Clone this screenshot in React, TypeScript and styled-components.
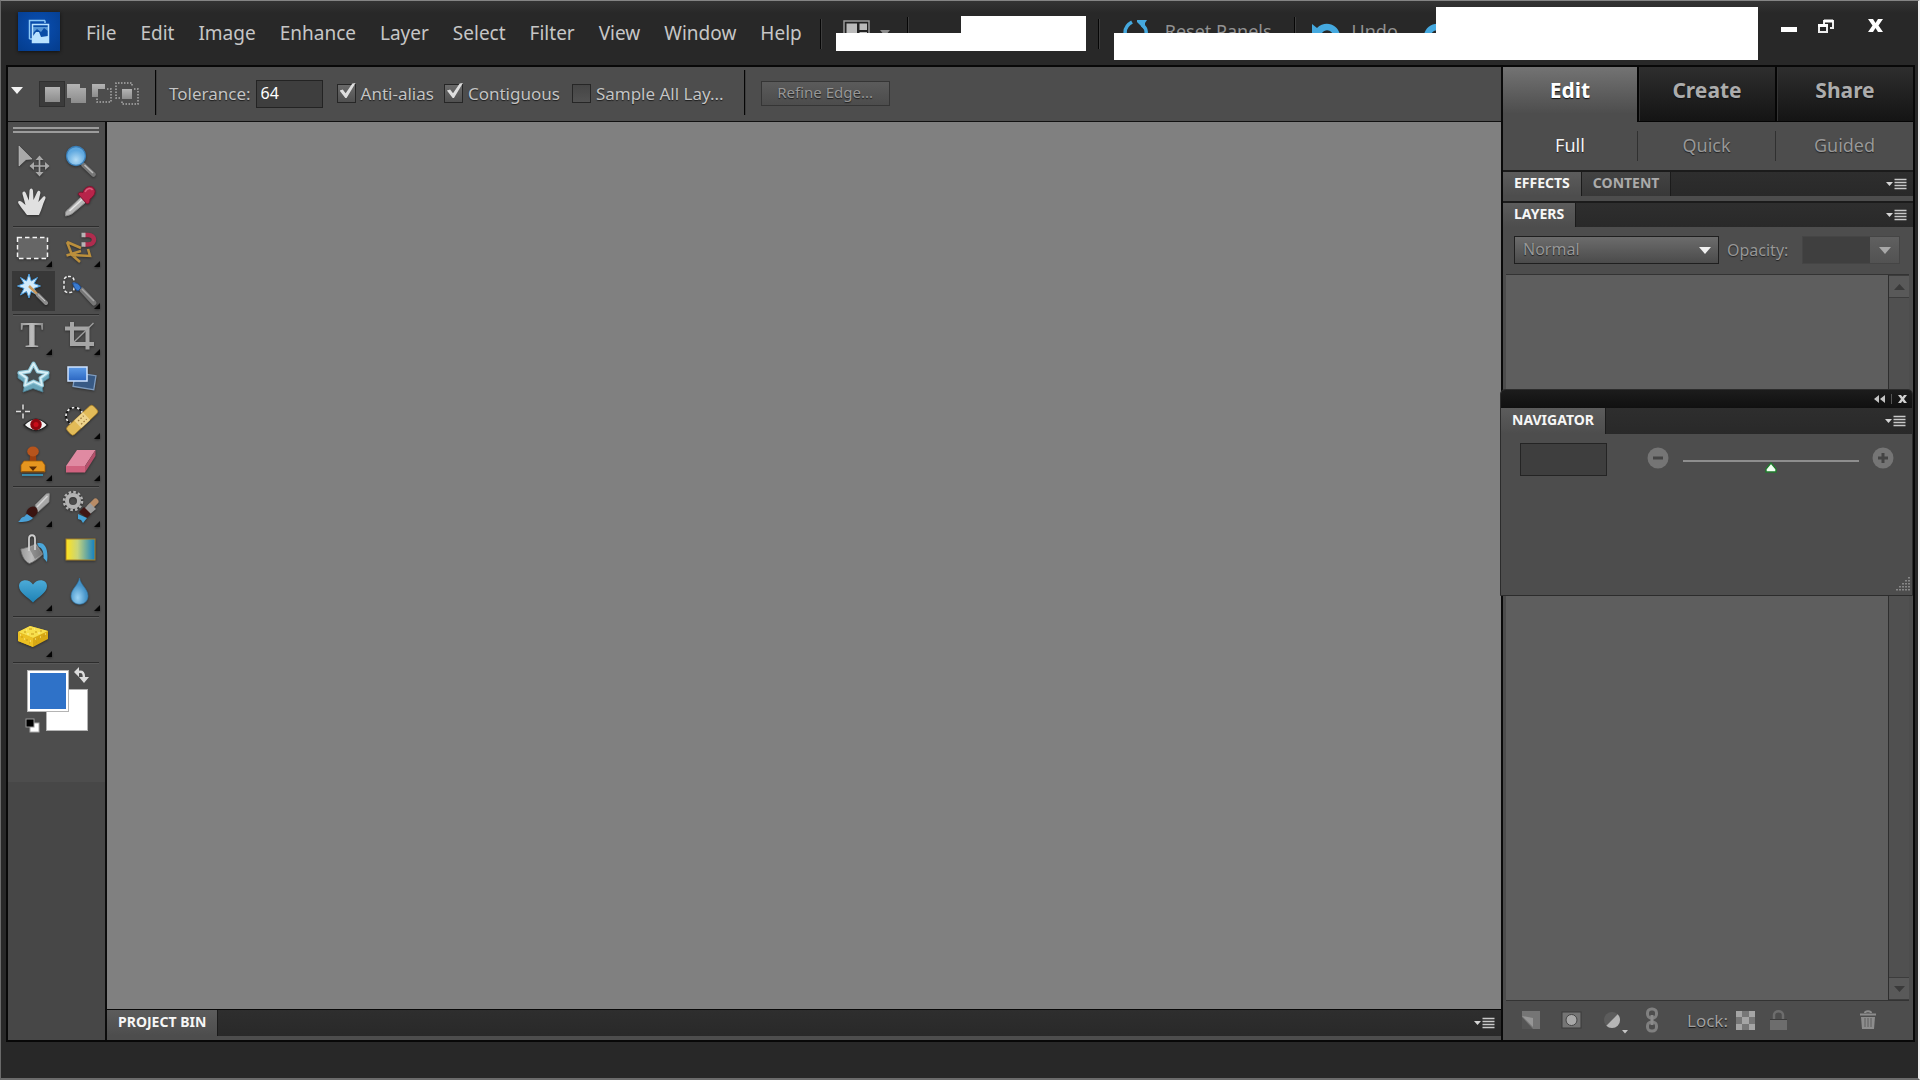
import React from "react";
import styled, { createGlobalStyle, css } from "styled-components";

const Global = createGlobalStyle`
  *, *::before, *::after { box-sizing: border-box; }
  body {
    margin: 0;
    background: #282828;
    font-family: "Noto Sans", "Open Sans", sans-serif;
    font-size: 17px;
    color: #c4c4c4;
  }
  button, input, select { font: inherit; color: inherit; }
  button { padding: 0; border: 0; background: none; cursor: pointer; }
  svg { display: block; }
`;

/* ---------- window frame ---------- */

const Frame = styled.div`
  display: flex;
  flex-direction: column;
  min-height: 100vh;
  border-top: 1px solid #858585;
  border-left: 1px solid #6a6a6a;
  border-right: 2px solid #f0f0f0;
  border-bottom: 2px solid #6c6c6c;
  background: linear-gradient(#343434, #282828 12px);
`;

const TitleBar = styled.header`
  display: flex;
  align-items: center;
  height: 64px;
  padding-left: 17px;
`;

const Logo = styled.div`
  width: 42px;
  height: 39px;
  margin-bottom: 4px;
  background: radial-gradient(circle at 50% 40%, #0a50b4, #043c8c);
  box-shadow: 0 1px 3px #111;
`;

const MenuBar = styled.nav`
  display: flex;
  gap: 24px;
  margin-left: 26px;
`;

const MenuItem = styled.button`
  font-size: 19px;
  line-height: 24px;
  color: #c6c6c6;
`;

const Rule = styled.span<{ $h: number; $top?: number; $ml?: number }>`
  flex: none;
  align-self: flex-start;
  width: 2px;
  height: ${(p) => p.$h}px;
  margin-top: ${(p) => p.$top ?? 0}px;
  margin-left: ${(p) => p.$ml ?? 0}px;
  border-left: 1px solid #060606;
  border-right: 1px solid #3e3e3e;
`;

const QuickBar = styled.div`
  position: relative;
  display: flex;
  flex: 1;
  align-self: stretch;
  align-items: flex-start;
  margin-left: 18px;
`;

const QuickButton = styled.button<{ $ml: number; $gap?: number }>`
  display: flex;
  align-items: flex-start;
  gap: ${(p) => p.$gap ?? 8}px;
  margin-left: ${(p) => p.$ml}px;
  padding-top: 18px;
  font-size: 18px;
  line-height: 24px;
  color: #929292;
  white-space: nowrap;
`;

const Cover = styled.span<{ $x: number; $y: number; $w: number; $h: number }>`
  position: absolute;
  left: ${(p) => p.$x}px;
  top: ${(p) => p.$y}px;
  width: ${(p) => p.$w}px;
  height: ${(p) => p.$h}px;
  background: #fff;
`;

const WindowButtons = styled.div`
  display: flex;
  align-self: flex-start;
  align-items: flex-start;
  gap: 17px;
  padding: 14px 33px 0 0;
`;

const WindowButton = styled.button<{ $ml?: number }>`
  width: 20px;
  height: 22px;
  margin-left: ${(p) => p.$ml ?? 0}px;
`;

const Workspace = styled.main`
  position: relative;
  display: flex;
  flex: 1;
  margin: 0 3px 0 5px;
  border: 2px solid #080808;
  background: #4d4d4d;
`;

const StatusStrip = styled.footer`
  height: 36px;
`;

const LeftSide = styled.div`
  display: flex;
  flex: 1;
  flex-direction: column;
  min-width: 0;
`;

/* ---------- option bar ---------- */

const OptionBar = styled.div`
  display: flex;
  align-items: center;
  height: 55px;
  padding-bottom: 1px;
  border-bottom: 1px solid #111;
  background: #4d4d4d;
  text-shadow: 0 1px 1px #1c1c1c;
`;

const PresetButton = styled.button`
  width: 12px;
  height: 14px;
  margin: 0 16px 6px 3px;
`;

const ModeGroup = styled.div`
  display: flex;
  margin-right: 15px;
`;

const ModeButton = styled.button<{ $on?: boolean }>`
  width: ${(p) => (p.$on ? 26 : 25)}px;
  height: 26px;
  ${(p) => p.$on && css`background: #3b3b3b; box-shadow: inset 0 0 0 1px #303030;`}
`;

const ToleranceField = styled.label`
  display: flex;
  align-items: center;
  gap: 5px;
  margin-left: 12px;
  input {
    width: 67px;
    height: 28px;
    padding: 0 4px 2px;
    border: 1px solid #232323;
    background: #3e3e3e;
    color: #fff;
    font-size: 16px;
  }
`;

const TickField = styled.label<{ $ml: number }>`
  display: flex;
  align-items: center;
  gap: 5px;
  margin-left: ${(p) => p.$ml}px;
  white-space: nowrap;
  input {
    position: relative;
    appearance: none;
    width: 19px;
    height: 19px;
    margin: 0;
    border: 1px solid #262626;
    background: linear-gradient(#454545, #525252);
  }
  input:checked {
    background: linear-gradient(#6a6a6a, #505050);
  }
  input:checked::after {
    content: "";
    position: absolute;
    left: 2px;
    top: -2px;
    width: 16px;
    height: 15px;
    background: #dedede;
    clip-path: polygon(0 50%, 20% 44%, 38% 68%, 80% 4%, 100% 0, 44% 100%, 36% 100%);
  }
`;

const RefineButton = styled.button`
  width: 129px;
  height: 25px;
  margin: 0 0 1px 15px;
  padding-bottom: 2px;
  border: 1px solid #353535;
  background: linear-gradient(#5b5b5b, #4c4c4c);
  font-size: 15px;
  line-height: 20px;
  color: #979797;
  text-shadow: 0 1px 1px #1c1c1c;
`;

/* ---------- toolbox ---------- */

const Row = styled.div`
  display: flex;
  flex: 1;
`;

const Toolbox = styled.aside`
  width: 99px;
  border-right: 2px solid #0c0c0c;
  background: #474747;
`;

const ToolPanel = styled.div`
  height: 660px;
  padding: 5px 5px 0 4px;
  background: #4d4d4d;
`;

const Grip = styled.div`
  height: 6px;
  margin: 0 1px 8px;
  border: solid #9c9c9c;
  border-width: 2px 0;
`;

const ToolGroup = styled.div`
  display: grid;
  grid-template-columns: 44px 44px;
  column-gap: 4px;
`;

const ToolRule = styled.hr`
  height: 4px;
  margin: 0 1px;
  border: 0;
  background: linear-gradient(transparent 1px, #2c2c2c 1px, #2c2c2c 2px, #5a5a5a 2px, #5a5a5a 3px, transparent 3px);
`;

const Tool = styled.button<{ $on?: boolean }>`
  width: 44px;
  height: 42px;
  ${(p) => p.$on && css`
    background: linear-gradient(#383838, #383838) 0 0 / 43px 40px no-repeat;
  `}
  svg { overflow: visible; filter: drop-shadow(0 1px 1px rgba(0, 0, 0, 0.4)); }
`;

const Swatches = styled.div`
  position: relative;
  height: 76px;
`;

const Swatch = styled.button<{ $x: number; $y: number; $fill: string }>`
  position: absolute;
  left: ${(p) => p.$x}px;
  top: ${(p) => p.$y}px;
  width: 42px;
  height: 42px;
  border: 1px solid #b4b4b4;
  background: ${(p) => p.$fill};
  box-shadow: inset 0 0 0 2px #fff;
`;

const SwatchAction = styled.button<{ $x: number; $y: number }>`
  position: absolute;
  left: ${(p) => p.$x}px;
  top: ${(p) => p.$y}px;
`;

/* ---------- document area ---------- */

const DocumentArea = styled.section`
  display: flex;
  flex: 1;
  flex-direction: column;
`;

const Canvas = styled.div`
  flex: 1;
  background: #808080;
`;

const BinBar = styled.div`
  padding-bottom: 4px;
  border-top: 1px solid #080808;
`;

/* ---------- panels ---------- */

const TabStrip = styled.div<{ $line?: boolean }>`
  display: flex;
  align-items: stretch;
  height: 26px;
  border-top: ${(p) => (p.$line === false ? 0 : 2)}px solid #1b1b1b;
  background: linear-gradient(#2e2e2e, #292929);
`;

const Tab = styled.button<{ $on?: boolean }>`
  padding: 0 11px 2px;
  border-right: 1px solid #1b1b1b;
  background: ${(p) => (p.$on ? "linear-gradient(#5c5c5c, #4d4d4d)" : "linear-gradient(#434343, #383838)")};
  color: ${(p) => (p.$on ? "#f6f6f6" : "#ababab")};
  font-size: 14px;
  font-weight: 700;
  line-height: 20px;
`;

const PanelMenu = styled.button`
  margin-left: auto;
  padding: 0 6px 0 0;
`;

const TrashButton = styled.button`
  margin-left: auto;
`;

const SidePanel = styled.aside`
  display: flex;
  flex-direction: column;
  width: 412px;
  border-left: 2px solid #0a0a0a;
  background: #4d4d4d;
`;

const BigTabs = styled.div`
  display: grid;
  grid-template-columns: 134px 1fr 1fr;
`;

const BigTab = styled.button<{ $on?: boolean }>`
  height: 55px;
  padding-bottom: 9px;
  border: solid #050505;
  border-width: ${(p) => (p.$on ? "0" : "0 0 1px 2px")};
  background: ${(p) => (p.$on ? "linear-gradient(#737373, #4d4d4d 85%)" : "linear-gradient(#2e2e2e, #141414)")};
  box-shadow: ${(p) => (p.$on ? "none" : "inset 1px 0 0 #333")};
  color: ${(p) => (p.$on ? "#fff" : "#acacac")};
  font-size: 21px;
  font-weight: 700;
  line-height: 28px;
  text-shadow: 0 1px 1px #111;
`;

const SubTabs = styled.div`
  display: grid;
  grid-template-columns: 134px 1fr 1fr;
  height: 48px;
  padding: 9px 0;
`;

const SubTab = styled.button<{ $on?: boolean }>`
  padding-bottom: 2px;
  border-left: ${(p) => (p.$on ? 0 : 1)}px solid #303030;
  color: ${(p) => (p.$on ? "#f4f4f4" : "#989898")};
  font-size: 18px;
  line-height: 24px;
  text-shadow: 0 1px 1px #222;
`;

const Gap = styled.div`
  height: 5px;
`;

const BlendRow = styled.div`
  display: flex;
  align-items: center;
  height: 47px;
  padding: 0 13px 1px 11px;
  color: #979797;
  text-shadow: 0 1px 1px #222;
`;

const SelectBox = styled.span`
  display: grid;
  width: 205px;
  select, svg { grid-area: 1 / 1; }
  svg { place-self: center end; margin-right: 8px; pointer-events: none; }
  select {
    appearance: none;
    height: 28px;
    padding: 0 8px 3px;
    border: 1px solid #1f1f1f;
    background: linear-gradient(#6c6c6c, #4b4b4b);
    outline: 0;
    font-size: 16px;
    text-shadow: inherit;
  }
`;

const OpacityField = styled.label`
  display: flex;
  flex: 1;
  align-items: center;
  justify-content: space-between;
  margin-left: 8px;
  font-size: 16px;
`;

const OpacityBox = styled.span`
  display: flex;
  height: 28px;
  border: 1px solid #454545;
  background: #3f3f3f;
  input { width: 67px; border: 0; padding: 0 4px; background: none; }
  button { display: grid; place-items: center; width: 29px; background: linear-gradient(#606060, #525252); }
`;

const LayerList = styled.div`
  display: flex;
  flex: 1;
  margin: 0 4px 0 3px;
  border: solid #333;
  border-width: 1px 0;
  background: #5e5e5e;
`;

const ScrollTrack = styled.div`
  display: flex;
  flex-direction: column;
  justify-content: space-between;
  width: 21px;
  margin-left: auto;
  border-left: 1px solid #2e2e2e;
  background: #505050;
`;

const ScrollButton = styled.button`
  display: grid;
  place-items: center;
  height: 23px;
  border: solid #3c3c3c;
  border-width: 1px 0;
  background: #595959;
`;

const LayerActions = styled.div`
  display: flex;
  align-items: center;
  height: 39px;
  padding: 0 36px 1px 18px;
  color: #a0a0a0;
  text-shadow: 0 1px 1px #111;
`;

const ActionButton = styled.button<{ $ml?: number }>`
  margin-left: ${(p) => p.$ml ?? 0}px;
  svg { overflow: visible; }
`;

const LockLabel = styled.span`
  margin-left: 28px;
`;

/* ---------- floating navigator ---------- */

const Navigator = styled.section`
  position: absolute;
  top: 322px;
  right: 0;
  width: 413px;
  height: 207px;
  border: 1px solid #2c2c2c;
  border-radius: 5px 5px 0 0;
  overflow: hidden;
  background: #4d4d4d;
`;

const NavTitle = styled.div`
  display: flex;
  justify-content: flex-end;
  align-items: center;
  gap: 6px;
  height: 18px;
  padding-right: 5px;
  background: linear-gradient(#1c1c1c, #101010);
`;

const NavBody = styled.div`
  display: flex;
  align-items: flex-start;
  padding: 9px 18px 0 19px;
`;

const ZoomInput = styled.input`
  width: 87px;
  height: 33px;
  margin-right: 40px;
  border: 1px solid #242424;
  background: #3e3e3e;
`;

const ZoomButton = styled.button`
  margin-top: 4px;
`;

const ZoomSlider = styled.input`
  appearance: none;
  flex: 1;
  min-width: 0;
  height: 16px;
  margin: 16px 13px 0 14px;
  background: linear-gradient(#8e8e8e, #8e8e8e) 0 1px / 100% 2px no-repeat;
  &::-webkit-slider-thumb {
    appearance: none;
    width: 12px;
    height: 12px;
    margin-top: 2px;
    background: url("data:image/svg+xml,%3Csvg xmlns='http://www.w3.org/2000/svg' width='12' height='12'%3E%3Cpath d='M6 1 11 7V10H1V7Z' fill='%23f2fff2' stroke='%231f7a2c' stroke-width='1.4'/%3E%3C/svg%3E");
  }
`;

const ResizeGrip = styled.svg`
  position: absolute;
  right: 2px;
  bottom: 4px;
`;

const HiddenDefs = styled.svg`
  position: absolute;
`;

/* ---------- drawings ---------- */

const Down = ({ w = 11, h = 6, c = "#eee" }: { w?: number; h?: number; c?: string }) => (
  <svg width={w} height={h} viewBox="0 0 10 6" preserveAspectRatio="none"><path d="M0 0H10L5 6Z" fill={c} /></svg>
);

const MenuGlyph = () => (
  <svg width="22" height="12" viewBox="0 0 22 12">
    <path d="M1 4H8L4.500 8Z" fill="#d5d5d5" />
    <path d="M9.500 1.500H21.500M9.500 4.500H21.500M9.500 7.500H21.500M9.500 10.500H21.500" stroke="#c9c9c9" strokeWidth="1.300" />
  </svg>
);

const Fly = () => <path d="M34 38 40 32V38Z" fill="#050505" />;

const toolArt: Record<string, React.ReactNode> = {
  Move: (
    <>
      <path d="M7 5 20 18 14 18.500 7 25Z" fill="#a9a9a9" stroke="#c0c0c0" strokeWidth=".6" />
      <path d="M27.500 16V34M18.500 25H36.500" stroke="#a8a8a8" strokeWidth="1.700" />
      <path d="M27.500 14.500 31.500 19H23.500ZM27.500 35.500 31.500 31H23.500ZM17.500 25 22 21V29ZM37.500 25 33 21V29Z" fill="#a8a8a8" />
    </>
  ),
  Zoom: (
    <>
      <path d="M23.500 24 33.500 33.500" stroke="#777" strokeWidth="4.500" strokeLinecap="round" />
      <path d="M24.500 24 33 32" stroke="#bbb" strokeWidth="1.500" />
      <circle cx="16" cy="15" r="9.500" fill="url(#lens)" stroke="#3b7fb8" strokeWidth="1.300" />
    </>
  ),
  Hand: (
    <path d="M15 32C12 28 8 23 6.500 20.500 5 18 8 17 10 19L13.500 22 10.500 11C10 8 13 7.500 13.800 10L16.800 17.500 17.500 8C17.500 4.500 21 4.500 21 8L21.500 17 25 9.500C26 6.500 29 7.500 28.300 10.500L26.300 19 30.500 14.500C32.500 12 34.500 14 33 16.500 30.500 21.500 30 26 27 32Z" fill="#e0e0e0" />
  ),
  Eyedropper: (
    <>
      <path d="M5.500 33C5 29 6 28 8.500 26L21 14 26 19 13 30C10.500 32 9 32 5.500 33Z" fill="#b5b5b5" stroke="#8b8b8b" />
      <path d="M9.500 28 22 16.500" stroke="#e5e5e5" strokeWidth="1.500" />
      <path d="M18 11C19 9 21 9 23 9.500 24 4 31 1.500 34 5.500 37 9.500 33 14 30 16 30 19 29 21.500 26.500 20.500Z" fill="#b8244a" stroke="#7f1430" />
      <path d="M25 9C27 5 31 4.500 32.500 7" fill="none" stroke="#d9607c" strokeWidth="1.500" />
    </>
  ),
  Marquee: (
    <><rect x="5.500" y="8.500" width="30" height="21" fill="#666" stroke="#f5f5f5" strokeWidth="1.500" strokeDasharray="4.500 3" /><Fly /></>
  ),
  Lasso: (
    <>
      <path d="M7 13 21 19M7 13 12 26 30 27 28 20M12 26 20 33M6.500 26.500 21 22" fill="none" stroke="#bb8f3c" strokeWidth="2.500" />
      <path d="M24 6H28C36 6 36 15.500 28 15.500H24" fill="none" stroke="#b02c4e" strokeWidth="4.500" />
      <path d="M21.500 6H25.500M21.500 15.500H25.500" stroke="#b5b5b5" strokeWidth="4.500" /><Fly />
    </>
  ),
  Wand: (
    <>
      <path d="M17 3 19.200 10 25.500 6.500 22 12.500 28.500 15 22 17.500 25.500 24 19 20.500 17 27 14.500 20.500 8.500 24 12 17.500 5.500 15 12 12.500 8.500 6.500 14.500 10Z" fill="#d2ecfd" stroke="#4a9bdc" />
      <path d="M17 15 26 24" stroke="#c99a5f" strokeWidth="2.500" />
      <path d="M26 24 34 32" stroke="#8d8d8d" strokeWidth="4" strokeLinecap="round" /><path d="M26 23.500 33 30" stroke="#ccc" />
    </>
  ),
  "Quick selection": (
    <>
      <rect x="4" y="5.500" width="10" height="16" rx="4" fill="none" stroke="#eee" strokeWidth="1.500" strokeDasharray="3 2" />
      <path d="M22 19 34 32" stroke="#777" strokeWidth="5" strokeLinecap="round" /><path d="M22 18 34 30" stroke="#a5a5a5" strokeWidth="1.500" />
      <path d="M12.500 12C17 11 20 14 21 17L18 20C14 18 14 15 12.500 12Z" fill="#3a7bd0" stroke="#1d4c91" /><Fly />
    </>
  ),
  Type: (
    <><text x="20" y="30" textAnchor="middle" fontFamily="Liberation Serif, serif" fontWeight="700" fontSize="35" fill="url(#steel)">T</text><Fly /></>
  ),
  Crop: (
    <>
      <path d="M5 11.500H27.500V32.500M12 5V27H34" fill="none" stroke="#a6a6a6" strokeWidth="4" />
      <path d="M14 25 33.500 6" stroke="#a0a0a0" strokeWidth="1.300" /><Fly />
    </>
  ),
  "Cookie cutter": (
    <>
      <path d="M6 14V19L13 24 11 33 21 29.500 31 33 29.500 24 37 19V14L21 22Z" fill="#6aa6ba" stroke="#4c8094" strokeWidth=".8" />
      <path d="M21.500 4.500 25.800 12.500 35.500 13.800 28.500 19 30 26.500 21.500 22.500 13 26.500 14.500 19 7.500 13.800 17.200 12.500Z" fill="#454e52" stroke="#8cc3d5" strokeWidth="4" strokeLinejoin="round" />
      <path d="M21.500 4.500 25.800 12.500 35.500 13.800 28.500 19 30 26.500 21.500 22.500 13 26.500 14.500 19 7.500 13.800 17.200 12.500Z" fill="none" stroke="#d9f0f7" strokeWidth="1.800" strokeLinejoin="round" />
    </>
  ),
  Straighten: (
    <>
      <rect x="14" y="15" width="21" height="14" transform="rotate(9 24 22)" fill="#385a85" stroke="#7f9dc0" strokeWidth="1.300" />
      <rect x="8" y="8" width="19" height="14" fill="url(#blue)" stroke="#cfe4ff" strokeWidth="1.500" />
    </>
  ),
  "Red eye": (
    <>
      <path d="M11 3.500V8.500M11 12.500V17.500M4 10.500H9M13 10.500H18" stroke="#ddd" strokeWidth="1.500" />
      <path d="M12 24Q24 12 35.500 24 24 35 12 24Z" fill="#f4f4f4" stroke="#222" strokeWidth="1.200" />
      <circle cx="24" cy="23.500" r="5.700" fill="#8f0710" /><circle cx="24" cy="23.500" r="2.500" fill="#c90d1a" />
    </>
  ),
  Healing: (
    <>
      <circle cx="14.500" cy="15" r="8.500" fill="none" stroke="#111" strokeWidth="1.700" />
      <circle cx="14.500" cy="15" r="8.500" fill="none" stroke="#eee" strokeWidth="1.700" strokeDasharray="2.500 2.800" />
      <g transform="rotate(-43 22 19)"><rect x="4" y="14" width="36" height="10.500" rx="3" fill="#e2bb58" stroke="#a17a27" strokeWidth=".7" /><rect x="16" y="14" width="12" height="10.500" fill="#eed48c" /><path d="M18.500 17H26M18.500 21.500H26" stroke="#9e7a3c" strokeWidth="1.300" strokeDasharray="1.500 1.800" /></g><Fly />
    </>
  ),
  Stamp: (
    <>
      <path d="M18 12H24L24.500 20H17.500Z" fill="#9b3f10" /><ellipse cx="21" cy="8.500" rx="5.800" ry="5" fill="#b6541c" />
      <path d="M12 18H30L33 22V29H9V22Z" fill="#e6961f" stroke="#a15d0a" strokeWidth=".8" />
      <path d="M9.500 28.500H32.500" stroke="#9a5a08" /><path d="M17 23.500H25L21 28Z" fill="#5a2c05" /><path d="M10 32H31" stroke="#39a3cf" strokeWidth="1.500" /><Fly />
    </>
  ),
  Eraser: (
    <>
      <path d="M17 7H35.500L25 23H6Z" fill="#e08aa2" /><path d="M6 23H25V29.500H6Z" fill="#d0627f" /><path d="M25 23 35.500 7V13L25 29.500Z" fill="#b4506b" /><Fly />
    </>
  ),
  Brush: (
    <>
      <path d="M23 16 34 5C36 4 37.500 4 37.500 5L37 13 26 23Z" fill="#a8a8a8" stroke="#858585" strokeWidth=".7" /><path d="M25 18 35.500 7" stroke="#d5d5d5" strokeWidth="1.500" />
      <ellipse cx="20" cy="23" rx="6" ry="5" transform="rotate(-40 20 23)" fill="#3a1411" />
      <path d="M15 25 21 29C18 33 11 33 6 33 9 31 8 29 11 28 13 28 13 26 15 25Z" fill="#4aa0d6" /><Fly />
    </>
  ),
  "Smart brush": (
    <>
      <circle cx="13" cy="12" r="6" fill="none" stroke="#b2b2b2" strokeWidth="4" /><circle cx="13" cy="12" r="9" fill="none" stroke="#b2b2b2" strokeWidth="2.500" strokeDasharray="2.600 2.110" />
      <path d="M30 18 35.500 12.500" stroke="#b98c66" strokeWidth="6" strokeLinecap="round" /><path d="M24 20 30 14 36 20 29 26Z" fill="#9c9c9c" /><path d="M19 23 24 18 31 25 27 29Z" fill="#401715" /><path d="M18 25 27 29 23 34 21 31 18 30Z" fill="#45a3d7" /><Fly />
    </>
  ),
  Bucket: (
    <>
      <path d="M8.700 18C14 17 20 15 24 12.500L31 23C27 27 22 31 17.500 32.500 13 31 9.500 25 8.700 18Z" fill="url(#steel)" stroke="#6c6c6c" strokeWidth=".8" />
      <path d="M23.500 13.500 30 23 23 28 17 17Z" fill="#5c5c5c" opacity=".45" />
      <path d="M17 20V8C17 3 23 3 23 8V19" fill="none" stroke="#cfcfcf" strokeWidth="1.800" />
      <path d="M25 12.500C32 10 37 17 35 31L31.500 27C32 21 30 17 27 16Z" fill="#4ba7da" />
    </>
  ),
  Gradient: <rect x="6" y="8" width="29" height="21" fill="url(#grad)" stroke="#a98226" strokeWidth="1" />,
  Shape: (
    <><path d="M21 29.500C16 24 7 20 7 13 7 6 17 5 21 11.500 25 5 35 6 35 13 35 20 26 24 21 29.500Z" fill="url(#heart)" /><Fly /></>
  ),
  Blur: (
    <><path d="M19.500 5C20.500 12 28 16 28 23 28 34 11 34 11 23 11 16 18.500 12 19.500 5Z" fill="url(#drop)" stroke="#3478a8" strokeWidth=".7" /><Fly /></>
  ),
  Sponge: (
    <>
      <path d="M6 13 18 7 36 12V20L21 28 6 22Z" fill="#d8a914" /><path d="M6 13 18 7 36 12 21 19Z" fill="#f7df4c" /><path d="M6 13 21 19V28L6 22Z" fill="#ecc023" />
      <path d="M12 13H14M17 10H20M23 13H25M28 12H30M19 15H22M9 18H11M14 21H16M17 24H18M26 20H27M31 17H33M24 23H25" stroke="#c79a18" strokeWidth="1.200" />
      <path d="M14 11H15M22 10H23M26 14H28M15 15H17M8 16H9M12 20H13M18 22H19M23 20H24M28 18H29M33 15H34" stroke="#fdf29a" strokeWidth="1.200" /><Fly />
    </>
  ),
};

const Defs = () => (
  <HiddenDefs width="0" height="0" aria-hidden="true">
    <defs>
      <radialGradient id="lens" cy=".7"><stop offset="0" stopColor="#b4dcf5" /><stop offset="1" stopColor="#5fa8df" /></radialGradient>
      <linearGradient id="steel"><stop offset="0" stopColor="#9a9a9a" /><stop offset=".5" stopColor="#bcbcbc" /><stop offset="1" stopColor="#888" /></linearGradient>
      <linearGradient id="blue" x2="0" y2="1"><stop offset="0" stopColor="#5c9be8" /><stop offset="1" stopColor="#2a65c0" /></linearGradient>
      <linearGradient id="grad"><stop offset="0" stopColor="#ffe21c" /><stop offset=".4" stopColor="#c8d57a" /><stop offset="1" stopColor="#0f7fc4" /></linearGradient>
      <linearGradient id="heart" x2="0" y2="1"><stop offset="0" stopColor="#4cabd8" /><stop offset="1" stopColor="#1f82b5" /></linearGradient>
      <radialGradient id="drop" cx=".4" cy=".75"><stop offset="0" stopColor="#9bd3f5" /><stop offset="1" stopColor="#4593c8" /></radialGradient>
      <linearGradient id="tile" x2="0" y2="1"><stop offset="0" stopColor="#b4b4b4" /><stop offset="1" stopColor="#8c8c8c" /></linearGradient>
    </defs>
  </HiddenDefs>
);

const toolGroups = [
  ["Move", "Zoom", "Hand", "Eyedropper"],
  ["Marquee", "Lasso", "Wand", "Quick selection"],
  ["Type", "Crop", "Cookie cutter", "Straighten", "Red eye", "Healing", "Stamp", "Eraser"],
  ["Brush", "Smart brush", "Bucket", "Gradient", "Shape", "Blur"],
  ["Sponge"],
];

const menus = ["File", "Edit", "Image", "Enhance", "Layer", "Select", "Filter", "View", "Window", "Help"];

const selectionModes: [string, React.ReactNode][] = [
  ["New selection", <rect x="6" y="6" width="15" height="15" fill="url(#tile)" />],
  ["Add to selection", <path d="M2 3H15V7H21V22H6V17H2Z" fill="url(#tile)" />],
  ["Subtract from selection", <><path d="M2 3H15V8H8V16H2Z" fill="url(#tile)" /><path d="M17 8H21V21H7V17" fill="none" stroke="#aaa" strokeWidth="1.500" strokeDasharray="1.500 1.500" /></>],
  ["Intersect with selection", <><rect x="7" y="8" width="10" height="10" fill="url(#tile)" /><path d="M5 17H1V2H17V6M19 8H23V23H7V20" fill="none" stroke="#aaa" strokeWidth="1.500" strokeDasharray="1.500 1.500" /></>],
];

const Panel = ({ tabs, line }: { tabs: string[]; line?: boolean }) => (
  <TabStrip $line={line}>
    {tabs.map((t, i) => <Tab key={t} $on={i === 0}>{t}</Tab>)}
    <PanelMenu aria-label={`${tabs[0]} menu`}><MenuGlyph /></PanelMenu>
  </TabStrip>
);

export default function App() {
  return (
    <Frame>
      <Global />
      <Defs />
      <TitleBar>
        <Logo>
          <svg width="42" height="39" viewBox="0 0 42 39">
            <path d="M11.500 27V8.500H27M11.500 27H14M27 8.500V11" fill="none" stroke="#8cc9f7" strokeWidth="1.500" />
            <rect x="14.500" y="12.500" width="16" height="18" fill="#0a4da6" stroke="#b9e2ff" strokeWidth="1.500" />
            <path d="M15 21 19 17 23 20 26 16 30 19V15H15Z" fill="#8cc9f7" opacity=".6" />
            <path d="M15 24 18 20 21 20 23 25 30 24V30H15Z" fill="#b9e2ff" />
          </svg>
        </Logo>
        <MenuBar>{menus.map((m) => <MenuItem key={m}>{m}</MenuItem>)}</MenuBar>
        <QuickBar>
          <Rule $h={30} $top={18} />
          <QuickButton $ml={21} aria-label="Arrange documents">
            <svg width="28" height="24" viewBox="0 0 28 24"><rect x="1" y="2" width="25" height="20" fill="#222" stroke="#999" strokeWidth="1.500" /><path d="M3.500 4.500H14V20H3.500ZM16.500 4.500H24V11H16.500ZM16.500 13H24V20H16.500Z" fill="#bbb" /></svg>
            <svg width="12" height="20" viewBox="0 0 12 20"><path d="M1 11H11L6 17Z" fill="#8c8c8c" /></svg>
          </QuickButton>
          <Rule $h={30} $top={16} $ml={16} />
          <Rule $h={30} $top={18} $ml={189} />
          <QuickButton $ml={23} $gap={17}>
            <svg width="25" height="26" viewBox="0 0 25 26"><path d="M9 3C0 8 0 18 8 23M16 23C25 18 25 10 19 6" fill="none" stroke="#45a9df" strokeWidth="3.500" /><path d="M14 1H24L22 4 22 11 14 3Z" fill="#45a9df" /></svg>
            Reset Panels
          </QuickButton>
          <Rule $h={30} $top={16} $ml={22} />
          <QuickButton $ml={15} $gap={11}>
            <svg width="30" height="26" viewBox="0 0 30 26"><path d="M1 5 6 9C14 1 27 5 29 16L24 20C22 11 15 9 11 14L15 18H1Z" fill="#45a9df" /></svg>
            Undo
          </QuickButton>
          <QuickButton $ml={25} aria-label="Redo">
            <svg width="30" height="26" viewBox="0 0 30 26"><path d="M29 5 24 9C16 1 3 5 1 16L6 20C8 11 15 9 19 14L15 18H29Z" fill="#45a9df" /></svg>
          </QuickButton>
          <Cover $x={16} $y={32} $w={250} $h={18} />
          <Cover $x={141} $y={15} $w={125} $h={35} />
          <Cover $x={294} $y={32} $w={330} $h={27} />
          <Cover $x={616} $y={6} $w={322} $h={53} />
        </QuickBar>
        <WindowButtons>
          <WindowButton aria-label="Minimize"><svg width="20" height="22"><rect x="2" y="12" width="16" height="5" fill="#fff" /></svg></WindowButton>
          <WindowButton aria-label="Restore"><svg width="20" height="22"><path d="M8 9V6H17V13H14" fill="none" stroke="#eee" strokeWidth="2" /><path d="M8 6H17" stroke="#fff" strokeWidth="3" /><rect x="3" y="11" width="8" height="6" fill="none" stroke="#eee" strokeWidth="2" /><path d="M2 10.500H12" stroke="#fff" strokeWidth="3" /></svg></WindowButton>
          <WindowButton $ml={12} aria-label="Close"><svg width="20" height="22"><path d="M3 4H8L10.500 8 13 4H18L13.500 10.500 18 17H13L10.500 13 8 17H3L7.500 10.500Z" fill="#fff" /></svg></WindowButton>
        </WindowButtons>
      </TitleBar>

      <Workspace>
        <LeftSide>
          <OptionBar>
            <PresetButton aria-label="Tool presets"><Down w={12} h={7} c="#f4f4f4" /></PresetButton>
            <ModeGroup>
              {selectionModes.map(([name, art], i) => (
                <ModeButton key={name} $on={i === 0} aria-label={name}><svg width="25" height="26">{art}</svg></ModeButton>
              ))}
            </ModeGroup>
            <Rule $h={45} $top={3} />
            <ToleranceField>Tolerance:<input defaultValue="64" /></ToleranceField>
            <TickField $ml={14}><input type="checkbox" defaultChecked />Anti-alias</TickField>
            <TickField $ml={10}><input type="checkbox" defaultChecked />Contiguous</TickField>
            <TickField $ml={12}><input type="checkbox" />Sample All Lay...</TickField>
            <Rule $h={45} $top={3} $ml={20} />
            <RefineButton>Refine Edge...</RefineButton>
          </OptionBar>
          <Row>
            <Toolbox>
              <ToolPanel>
                <Grip />
                {toolGroups.map((g) => (
                  <React.Fragment key={g[0]}>
                    <ToolGroup>
                      {g.map((t) => (
                        <Tool key={t} $on={t === "Wand"} aria-label={t}><svg width="44" height="42">{toolArt[t]}</svg></Tool>
                      ))}
                    </ToolGroup>
                    <ToolRule />
                  </React.Fragment>
                ))}
                <Swatches>
                  <Swatch $x={34} $y={24} $fill="#fff" aria-label="Background colour" />
                  <Swatch $x={15} $y={5} $fill="#2f72c8" aria-label="Foreground colour" />
                  <SwatchAction $x={62} $y={2} aria-label="Swap colours">
                    <svg width="15" height="16"><path d="M4 5C9 4 10 6 10 11" fill="none" stroke="#ddd" strokeWidth="2.500" /><path d="M0 5 5 0V10ZM5 10H15L10 16Z" fill="#ddd" /></svg>
                  </SwatchAction>
                  <SwatchAction $x={13} $y={53} aria-label="Default colours">
                    <svg width="15" height="15"><rect x="5" y="5" width="9" height="9" fill="#fff" stroke="#aaa" /><rect x="1" y="1" width="8" height="8" fill="#000" stroke="#999" /></svg>
                  </SwatchAction>
                </Swatches>
              </ToolPanel>
            </Toolbox>
            <DocumentArea>
              <Canvas />
              <BinBar><Panel tabs={["PROJECT BIN"]} line={false} /></BinBar>
            </DocumentArea>
          </Row>
        </LeftSide>

        <SidePanel>
          <BigTabs><BigTab $on>Edit</BigTab><BigTab>Create</BigTab><BigTab>Share</BigTab></BigTabs>
          <SubTabs><SubTab $on>Full</SubTab><SubTab>Quick</SubTab><SubTab>Guided</SubTab></SubTabs>
          <Panel tabs={["EFFECTS", "CONTENT"]} />
          <Gap />
          <Panel tabs={["LAYERS"]} />
          <BlendRow>
            <SelectBox>
              <select aria-label="Blend mode"><option>Normal</option></select>
              <Down w={12} h={7} c="#f0f0f0" />
            </SelectBox>
            <OpacityField>
              Opacity:
              <OpacityBox><input /><button aria-label="Opacity slider"><Down w={12} h={7} c="#a8a8a8" /></button></OpacityBox>
            </OpacityField>
          </BlendRow>
          <LayerList>
            <ScrollTrack>
              <ScrollButton aria-label="Scroll up"><svg width="11" height="6"><path d="M0 6H11L5.500 0Z" fill="#3a3a3a" /></svg></ScrollButton>
              <ScrollButton aria-label="Scroll down"><Down c="#3a3a3a" /></ScrollButton>
            </ScrollTrack>
          </LayerList>
          <LayerActions>
            <ActionButton aria-label="New layer"><svg width="20" height="20"><rect x="1" y="1" width="18" height="18" fill="#757575" /><path d="M1 6 12 17V8Z" fill="#969696" /><path d="M1 7V19H12Z" fill="#555" /></svg></ActionButton>
            <ActionButton $ml={20} aria-label="Add mask"><svg width="21" height="20"><rect x="1" y="2" width="19" height="16" fill="#757575" stroke="#3a3a3a" /><circle cx="10.500" cy="10" r="5.500" fill="#a8a8a8" stroke="#444" /></svg></ActionButton>
            <ActionButton $ml={20} aria-label="Adjustment layer"><svg width="24" height="20"><circle cx="10" cy="10" r="8" fill="#5c5c5c" /><path d="M15.700 4.300A8 8 0 0 1 4.300 15.700Z" fill="#b5b5b5" /><path d="M20 20H26L23 23.500Z" fill="#c5c5c5" /></svg></ActionButton>
            <ActionButton $ml={19} aria-label="Link layers"><svg width="14" height="26"><g fill="none" stroke="#808080" strokeWidth="3"><rect x="2.500" y="2" width="9" height="9" rx="4" /><rect x="2.500" y="15" width="9" height="9" rx="4" /><path d="M7 8V18" stroke="#8b8b8b" /></g></svg></ActionButton>
            <LockLabel>Lock:</LockLabel>
            <ActionButton $ml={8} aria-label="Lock transparent pixels"><svg width="19" height="19"><rect width="19" height="19" fill="#777" /><path d="M0 0H6V6H0ZM13 0H19V6H13ZM6 6H13V13H6ZM0 13H6V19H0ZM13 13H19V19H13Z" fill="#a5a5a5" /></svg></ActionButton>
            <ActionButton $ml={14} aria-label="Lock all"><svg width="19" height="22"><path d="M5 11V6C5 1 14 1 14 6V11" fill="none" stroke="#6d6d6d" strokeWidth="2.500" /><rect x="1" y="10" width="17" height="11" fill="#6d6d6d" /><path d="M1 10.500H18" stroke="#3c3c3c" /></svg></ActionButton>
            <TrashButton aria-label="Delete layer"><svg width="18" height="20"><path d="M1 4.500H17M6 3C6 .5 12 .5 12 3" fill="none" stroke="#8d8d8d" strokeWidth="2" /><path d="M2 7H16L15 19H3Z" fill="#8d8d8d" /><path d="M6 8V17M9 8V17M12 8V17" stroke="#5e5e5e" /></svg></TrashButton>
          </LayerActions>
        </SidePanel>

        <Navigator>
          <NavTitle>
            <button aria-label="Collapse"><svg width="11" height="8"><path d="M0 4 5 0V8ZM6 4 11 0V8Z" fill="#c4c4c4" /></svg></button>
            <svg width="1" height="10"><path d="M.5 0V10" stroke="#555" /></svg>
            <button aria-label="Close navigator"><svg width="9" height="8"><path d="M0 0H3L4.500 2 6 0H9L6 4 9 8H6L4.500 6 3 8H0L3 4Z" fill="#d0d0d0" /></svg></button>
          </NavTitle>
          <Panel tabs={["NAVIGATOR"]} line={false} />
          <NavBody>
            <ZoomInput aria-label="Zoom level" />
            <ZoomButton aria-label="Zoom out"><svg width="22" height="22"><circle cx="11" cy="11" r="10.500" fill="#757575" /><path d="M6 11H16" stroke="#444" strokeWidth="3" /></svg></ZoomButton>
            <ZoomSlider type="range" aria-label="Zoom" defaultValue="50" />
            <ZoomButton aria-label="Zoom in"><svg width="22" height="22"><circle cx="11" cy="11" r="10.500" fill="#757575" /><path d="M6 11H16M11 6V16" stroke="#444" strokeWidth="3" /></svg></ZoomButton>
          </NavBody>
          <ResizeGrip width="15" height="15"><path d="M14 1V15M11 4V15M8 7V15M5 10V15M2 13V15" stroke="#9a9a9a" strokeWidth="1.500" strokeDasharray="1.500 1.500" /></ResizeGrip>
        </Navigator>
      </Workspace>
      <StatusStrip />
    </Frame>
  );
}
